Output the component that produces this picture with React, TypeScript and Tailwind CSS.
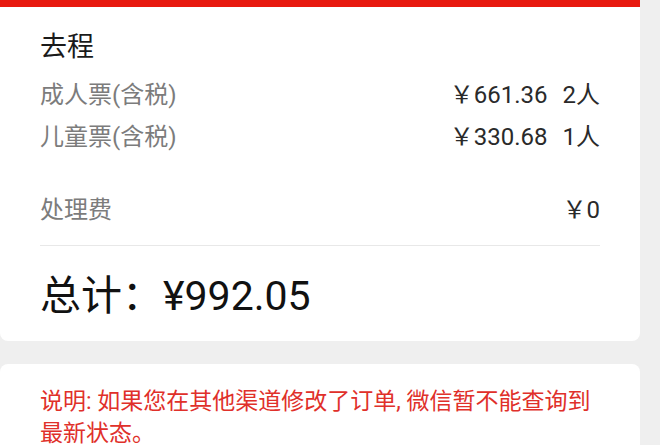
import React from 'react';

const font = { fontFamily: 'Roboto, "Noto Sans CJK SC", sans-serif' };

const rows = [
  { label: '成人票(含税)', price: '661.36', count: '2人' },
  { label: '儿童票(含税)', price: '330.68', count: '1人' },
];

export default function App() {
  return (
    <div className="w-[660px] h-[445px] overflow-hidden bg-[#efefef]" style={font}>
      <div className="w-[640px] bg-white rounded-b-lg">
        <div className="h-[7px] bg-[#e8190f]" />
        <div className="px-10 pt-[20px] pb-[19px]">
          <div className="text-[27px] leading-[40px] text-[#1a1a1a]">去程</div>
          <div className="mt-[7px]">
            {rows.map((r) => (
              <div key={r.label} className="flex justify-between items-center h-[42px] text-[24px]">
                <span className="text-[#7c7c7c]">{r.label}</span>
                <span className="text-[#2a2a2a]">
                  ￥{r.price}
                  <span className="ml-[15px]">{r.count}</span>
                </span>
              </div>
            ))}
          </div>
          <div className="flex justify-between items-center h-[42px] mt-[31px] text-[24px]">
            <span className="text-[#7c7c7c]">处理费</span>
            <span className="text-[#2a2a2a]">￥0</span>
          </div>
          <div className="h-px bg-[#e8e8e8] mt-[14px]" />
          <div className="mt-[26px] h-[50px] flex items-center text-[41px] text-[#111]">总计：¥992.05</div>
        </div>
      </div>
      <div className="w-[640px] mt-[23px] bg-white rounded-lg px-10 pt-[22px] pb-4">
        <p className="text-[23px] leading-[32px] text-[#e0302a]">
          说明: 如果您在其他渠道修改了订单, 微信暂不能查询到最新状态。
        </p>
      </div>
    </div>
  );
}
